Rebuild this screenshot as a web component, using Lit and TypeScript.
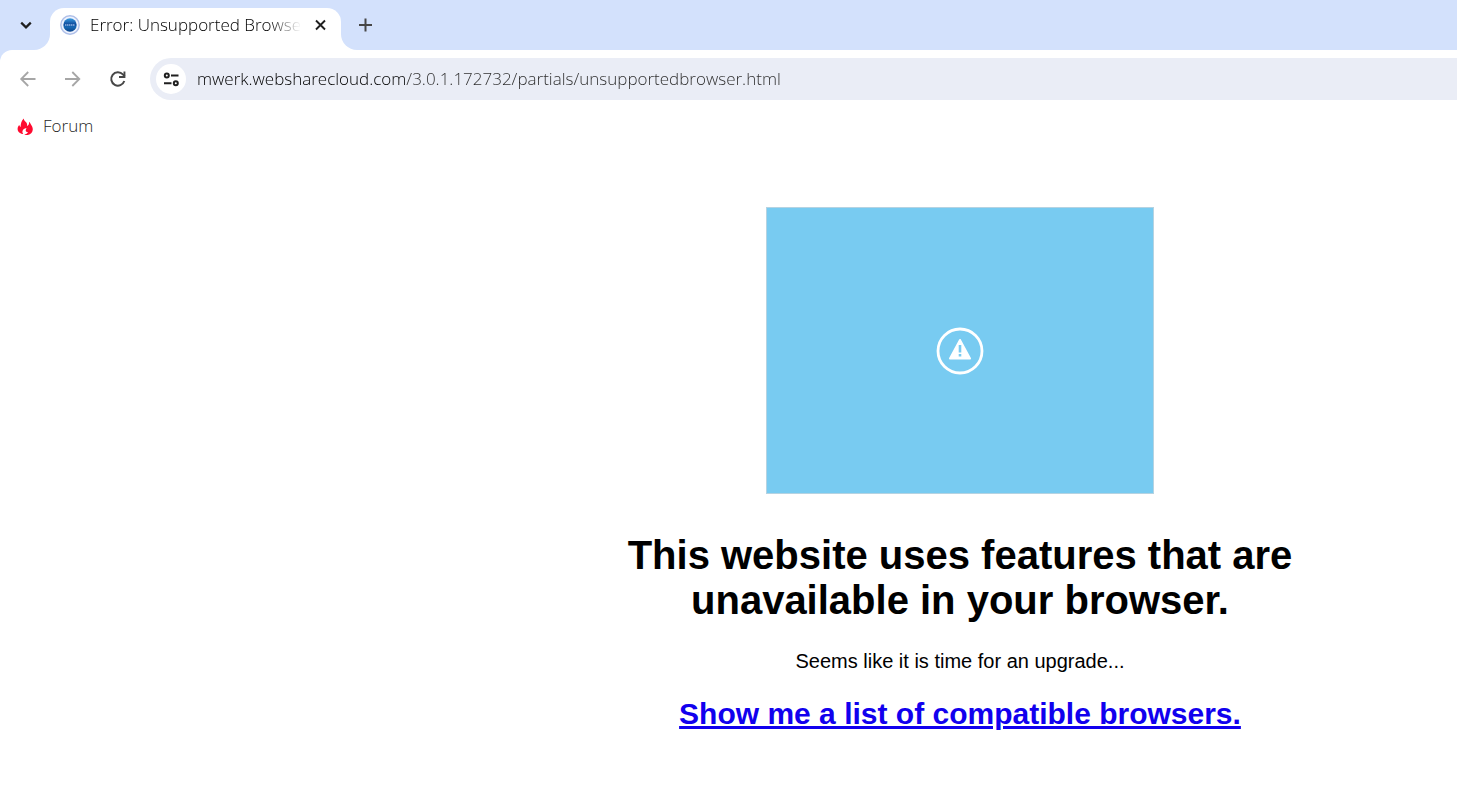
import { LitElement, html, css, svg } from "lit";
import { customElement, property } from "lit/decorators.js";

const ICONS = {
  chevron: svg`<path d="M5.200 7.600l4.800 4.800 4.800-4.800" fill="none" stroke="#1f1f1f" stroke-width="2.200"/>`,
  close: svg`<path d="M5 5.500l9 9m0-9l-9 9" stroke="#1f1f1f" stroke-width="1.900"/>`,
  plus: svg`<path d="M9.500 3.500v13M3 10h13" stroke="#474747" stroke-width="2"/>`,
  back: svg`<path d="M17.500 10H4M10.200 3L3.200 10l7 7" fill="none" stroke="#a6a6a6" stroke-width="1.800"/>`,
  forward: svg`<path d="M2 10H15.500M9.300 3l7 7-7 7" fill="none" stroke="#a6a6a6" stroke-width="1.800"/>`,
  reload: svg`<path d="M16.300 12a6.700 6.700 0 1 1-1.400-6.600l1.800 1.800" fill="none" stroke="#474747" stroke-width="2"/><path d="M17.400 2.600v6.400H11V7h4.500V2.600z" fill="#474747"/>`,
  tune: svg`<g fill="none" stroke="#1f1f1f" stroke-width="2"><circle cx="5.800" cy="6.500" r="2"/><path d="M10 6.500h7.500M3 14.200h7.500"/><circle cx="14.800" cy="14.200" r="2"/></g>`,
  globe: svg`<defs><linearGradient id="g" x1="0" y1="0" x2="0" y2="1"><stop offset="0" stop-color="#3a9be0"/><stop offset=".45" stop-color="#0d4a9c"/><stop offset=".65" stop-color="#1668b4"/><stop offset="1" stop-color="#0a4288"/></linearGradient></defs><circle cx="10" cy="10" r="9.200" fill="#eef2fd" stroke="#aebfe8" stroke-width="1.400"/><circle cx="10" cy="10" r="6.700" fill="url(#g)"/><path d="M5 10h10" stroke="#6f9bd4" stroke-width="1.800" stroke-dasharray="1.400 .5"/>`,
  flame: svg`<path fill="#ff0a2f" d="M8.800 2.600c.1 1.700 1 2.600 2 3.500 1.100 1 1.600 2.200 1.200 3.900 1.300-.4 2.300-1.700 2.100-4.300 1.200.8 1.300 1.900 2 3 .8 1.300 1.700 2.700 1.700 4.600 0 3-2 5.200-5 5.600-1.300.2-2.600 0-3.600-.5 1.800-.1 3.300-.9 3.700-2.500-1.300.5-2.200-.1-2.200-1.300 0-1 .5-1.700.8-2.600-2.400.5-4.100 1.900-4.100 3.800 0 .9.300 1.600.8 2.200-3.200-.4-5.600-2.300-5.600-5.100 0-1.800.7-2.800 1.700-3.900.2 1 .7 1.600 1.300 2 .1-3.200.8-6.500 3.200-8.400z"/>`,
};

@customElement("ui-icon")
export class UiIcon extends LitElement {
  @property() name: keyof typeof ICONS = "plus";
  static styles = css`
    :host { display: block; width: 20px; height: 20px; flex: none; }
    svg { display: block; }
  `;
  render() {
    return html`<svg width="20" height="20" viewBox="0 0 20 20" aria-hidden="true">${ICONS[this.name]}</svg>`;
  }
}

@customElement("app-root")
export class AppRoot extends LitElement {
  static styles = css`
    :host {
      display: block;
      min-height: 100vh;
      background: #fff;
      font-family: "Open Sans", "Noto Sans", sans-serif;
      font-weight: 300;
      color: #000;
    }
    button {
      display: grid;
      place-items: center;
      padding: 0;
      border: 0;
      background: none;
      font: inherit;
      color: inherit;
    }
    .tabs {
      display: flex;
      height: 50px;
      background: linear-gradient(to right, #fff 360px, #d3e1fc 360px);
    }
    .search {
      width: 50px;
      height: 50px;
      padding-left: 2px;
      background: #d3e1fc;
      border-bottom-right-radius: 16px;
    }
    .shelf {
      width: 291px;
      padding-top: 8px;
      box-sizing: border-box;
      background: linear-gradient(#d3e1fc 24px, #fff 24px);
    }
    .tab {
      display: flex;
      align-items: center;
      height: 42px;
      padding: 0 10px 8px;
      box-sizing: border-box;
      gap: 10px;
      background: #fff;
      border-radius: 14px 14px 0 0;
    }
    .title {
      flex: 1;
      white-space: nowrap;
      font-size: 17px;
      line-height: 24px;
      mask-image: linear-gradient(to right, #000 85%, transparent);
    }
    .rest { flex: 1; display: flex; background: #d3e1fc; border-bottom-left-radius: 16px; }
    .new { width: 50px; }
    .corner { background: #d3e1fc; }
    .toolbar {
      display: flex;
      align-items: center;
      height: 58px;
      padding-left: 5px;
      background: #fff;
      border-top-left-radius: 12px;
    }
    .nav { width: 45px; height: 42px; }
    .address {
      flex: 1;
      display: flex;
      align-items: center;
      height: 42px;
      margin-left: 10px;
      padding-left: 6px;
      gap: 11px;
      box-sizing: border-box;
      background: #eaedf6;
      border-radius: 21px 0 0 21px;
    }
    .site { width: 30px; height: 30px; border-radius: 50%; background: #fff; }
    .url {
      flex: 1;
      min-width: 0;
      padding: 0;
      border: 0;
      outline: 0;
      font: inherit;
      font-size: 17px;
      line-height: 24px;
      color: transparent;
      caret-color: #000;
      background: linear-gradient(to right, #000 208px, #2c2c2c 208px);
      background-clip: text;
      -webkit-background-clip: text;
    }
    .bookmarks { display: flex; padding: 6px 15px; }
    .bookmark {
      display: flex;
      align-items: center;
      gap: 8px;
      font-size: 17px;
      line-height: 24px;
      color: #1f1f1f;
      text-decoration: none;
    }
    main {
      display: flex;
      flex-direction: column;
      align-items: center;
      padding: 63px 0 50px 463px;
      font-family: "Liberation Sans", Arial, sans-serif;
      font-weight: 400;
      color: #000;
      text-align: center;
    }
    .picture {
      display: grid;
      place-items: center;
      width: 386px;
      height: 285px;
      border: 1px solid #b5d3e2;
      background: #78cbf1;
    }
    h1 { max-width: 720px; margin: 39px 0 0; font-size: 40px; line-height: 45px; }
    p { margin: 26px 0 0; font-size: 20px; line-height: 24px; }
    h2 { margin: 23px 0 0; font-size: 30px; line-height: 36px; }
    h2 a { color: #1100ee; }
  `;

  render() {
    return html`
      <header>
        <div class="tabs">
          <button class="search" aria-label="Search tabs"><ui-icon name="chevron"></ui-icon></button>
          <div class="shelf">
            <div class="tab">
              <ui-icon name="globe"></ui-icon>
              <span class="title">Error: Unsupported Browse</span>
              <button aria-label="Close tab"><ui-icon name="close"></ui-icon></button>
            </div>
          </div>
          <div class="rest"><button class="new" aria-label="New tab"><ui-icon name="plus"></ui-icon></button></div>
        </div>
        <div class="corner">
          <div class="toolbar">
            <button class="nav" aria-label="Back"><ui-icon name="back"></ui-icon></button>
            <button class="nav" aria-label="Forward"><ui-icon name="forward"></ui-icon></button>
            <button class="nav" aria-label="Reload"><ui-icon name="reload"></ui-icon></button>
            <div class="address">
              <button class="site" aria-label="View site information"><ui-icon name="tune"></ui-icon></button>
              <input class="url" aria-label="Address" value="mwerk.websharecloud.com/3.0.1.172732/partials/unsupportedbrowser.html" />
            </div>
          </div>
        </div>
        <nav class="bookmarks">
          <a class="bookmark" href="#forum"><ui-icon name="flame"></ui-icon>Forum</a>
        </nav>
      </header>
      <main>
        <div class="picture">
          <svg width="48" height="48" viewBox="0 0 48 48" aria-hidden="true">
            <circle cx="24" cy="24" r="22" fill="none" stroke="#fff" stroke-width="2.800"/>
            <path d="M24 13L34 31.500H14z" fill="#fff" stroke="#fff" stroke-width="2" stroke-linejoin="round"/>
            <path d="M24 18v7.500M24 27v2.500" stroke="#78cbf1" stroke-width="2.600"/>
          </svg>
        </div>
        <h1>This website uses features that are unavailable in your browser.</h1>
        <p>Seems like it is time for an upgrade...</p>
        <h2><a href="#browsers">Show me a list of compatible browsers.</a></h2>
      </main>
    `;
  }
}
